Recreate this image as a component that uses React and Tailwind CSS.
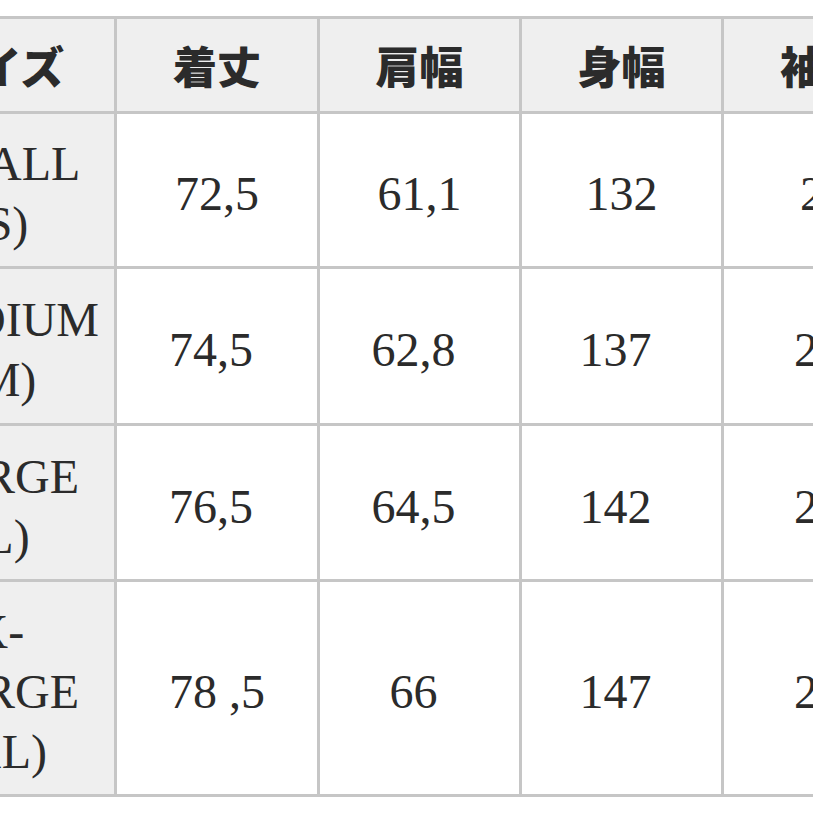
import React from "react";

const headers = ["サイズ", "着丈", "肩幅", "身幅", "袖丈"];

const rows = [
  { h: "h-[155px]", size: ["SMALL", "(S)"], vals: ["72,5", "61,1", "132", "22"] },
  { h: "h-[157px]", size: ["MEDIUM", "(M)"], vals: ["74,5 ", "62,8 ", "137 ", "23 "] },
  { h: "h-[156px]", size: ["LARGE", "(L)"], vals: ["76,5 ", "64,5 ", "142 ", "24 "] },
  { h: "h-[215px]", size: ["X-", "LARGE", "(XL)"], vals: ["78 ,5", "66 ", "147 ", "25 "] },
];

const serif = { fontFamily: '"Liberation Serif", "Times New Roman", serif' };
const jp = { fontFamily: '"Noto Sans CJK JP", "Noto Sans", sans-serif' };

export default function App() {
  return (
    <div className="w-[813px] h-[813px] overflow-hidden bg-white pt-[16px]">
      <div className="ml-[-116px] w-[1043px] grid grid-cols-[233px_203px_202px_202px_203px] border-t-[3px] border-[#c6c6c6] text-[#2b2b2b]">
        {headers.map((h) => (
          <div
            key={h}
            style={jp}
            className="h-[95px] flex items-center justify-center bg-[#efefef] border-r-[3px] border-b-[3px] border-[#c6c6c6] text-[44px] font-black leading-none"
          >
            {h}
          </div>
        ))}
        {rows.map((r, ri) => (
          <React.Fragment key={ri}>
            <div
              style={serif}
              className={`${r.h} flex flex-col items-center justify-center bg-[#efefef] border-r-[3px] border-b-[3px] border-[#c6c6c6] px-[12px] pt-[8px] text-[48px] leading-[60px]`}
            >
              {r.size.map((s) => (
                <span key={s} className="block whitespace-pre">
                  {s}
                </span>
              ))}
            </div>
            {r.vals.map((v, vi) => (
              <div
                key={vi}
                style={serif}
                className={`${r.h} flex items-center justify-center bg-white border-r-[3px] border-b-[3px] border-[#c6c6c6] pt-[8px] text-[48px] leading-[60px]`}
              >
                <span className="whitespace-pre">{v}</span>
              </div>
            ))}
          </React.Fragment>
        ))}
      </div>
    </div>
  );
}
